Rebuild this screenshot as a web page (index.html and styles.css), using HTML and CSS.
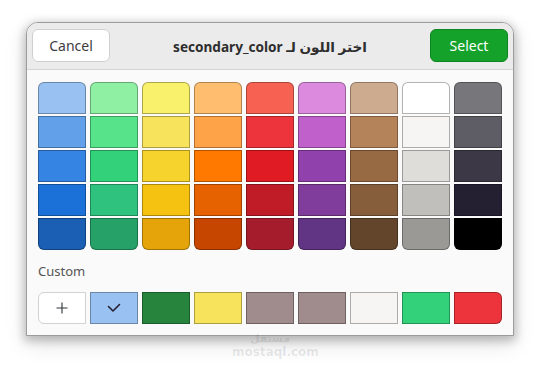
FILE: index.html
```
<!DOCTYPE html>
<html lang="ar">
<head>
<meta charset="utf-8">
<link rel="stylesheet" href="styles.css">
</head>
<body>
<div class="window">
  <div class="header">
    <button class="btn cancel">Cancel</button>
    <div class="title" dir="rtl">اختر اللون لـ secondary_color</div>
    <button class="btn select">Select</button>
  </div>
  <div class="content">
    <div class="palette">
      <div class="col">
        <div class="sw" style="background:#99c1f1"></div>
        <div class="sw" style="background:#62a0ea"></div>
        <div class="sw" style="background:#3584e4"></div>
        <div class="sw" style="background:#1c71d8"></div>
        <div class="sw" style="background:#1a5fb4"></div>
      </div>
      <div class="col">
        <div class="sw" style="background:#8ff0a4"></div>
        <div class="sw" style="background:#57e389"></div>
        <div class="sw" style="background:#33d17a"></div>
        <div class="sw" style="background:#2ec27e"></div>
        <div class="sw" style="background:#26a269"></div>
      </div>
      <div class="col">
        <div class="sw" style="background:#f9f06b"></div>
        <div class="sw" style="background:#f8e45c"></div>
        <div class="sw" style="background:#f6d32d"></div>
        <div class="sw" style="background:#f5c211"></div>
        <div class="sw" style="background:#e5a50a"></div>
      </div>
      <div class="col">
        <div class="sw" style="background:#ffbe6f"></div>
        <div class="sw" style="background:#ffa348"></div>
        <div class="sw" style="background:#ff7800"></div>
        <div class="sw" style="background:#e66100"></div>
        <div class="sw" style="background:#c64600"></div>
      </div>
      <div class="col">
        <div class="sw" style="background:#f66151"></div>
        <div class="sw" style="background:#ed333b"></div>
        <div class="sw" style="background:#e01b24"></div>
        <div class="sw" style="background:#c01c28"></div>
        <div class="sw" style="background:#a51d2d"></div>
      </div>
      <div class="col">
        <div class="sw" style="background:#dc8add"></div>
        <div class="sw" style="background:#c061cb"></div>
        <div class="sw" style="background:#9141ac"></div>
        <div class="sw" style="background:#813d9c"></div>
        <div class="sw" style="background:#613583"></div>
      </div>
      <div class="col">
        <div class="sw" style="background:#cdab8f"></div>
        <div class="sw" style="background:#b5835a"></div>
        <div class="sw" style="background:#986a44"></div>
        <div class="sw" style="background:#865e3c"></div>
        <div class="sw" style="background:#63452c"></div>
      </div>
      <div class="col">
        <div class="sw" style="background:#ffffff"></div>
        <div class="sw" style="background:#f6f5f4"></div>
        <div class="sw" style="background:#deddda"></div>
        <div class="sw" style="background:#c0bfbc"></div>
        <div class="sw" style="background:#9a9996"></div>
      </div>
      <div class="col">
        <div class="sw" style="background:#77767b"></div>
        <div class="sw" style="background:#5e5c64"></div>
        <div class="sw" style="background:#3d3846"></div>
        <div class="sw" style="background:#241f31"></div>
        <div class="sw" style="background:#000000"></div>
      </div>
    </div>
    <div class="label">Custom</div>
    <div class="custom">
      <div class="sw add">
        <svg width="12" height="12" viewBox="0 0 12 12"><path d="M6 0.5V11.5M0.5 6H11.5" stroke="#2e3436" stroke-width="1.1" fill="none"/></svg>
      </div>
      <div class="sw" style="background:#99c1f1">
        <svg width="14" height="10" viewBox="0 0 14 10"><path d="M1.5 3.5L6 8L12.5 1.5" stroke="#241f31" stroke-width="1.6" fill="none" stroke-linecap="round" stroke-linejoin="round"/></svg>
      </div>
      <div class="sw" style="background:#26843c"></div>
      <div class="sw" style="background:#f8e45c"></div>
      <div class="sw" style="background:#a08c8c"></div>
      <div class="sw" style="background:#a08c8c"></div>
      <div class="sw" style="background:#f6f5f4"></div>
      <div class="sw" style="background:#33d17a"></div>
      <div class="sw last" style="background:#ed333b"></div>
    </div>
  </div>
</div>
<div class="watermark">
  <div class="wm-ar">مستقل</div>
  <div class="wm-en">mostaql.com</div>
</div>
</body>
</html>
```
FILE: styles.css
```
html, body {
  margin: 0;
  padding: 0;
  background: #ffffff;
}
body {
  width: 540px;
  height: 365px;
  overflow: hidden;
  position: relative;
  font-family: "Noto Sans", "DejaVu Sans", sans-serif;
}
.window {
  box-sizing: border-box;
  margin: 22px 0 0 26px;
  width: 488px;
  height: 314px;
  background: #fafafa;
  border: 1px solid #9c9c9c;
  border-radius: 12px 12px 0 0;
  box-shadow: 0 3px 10px 2px rgba(0, 0, 0, 0.22), 0 8px 22px rgba(0, 0, 0, 0.12);
  overflow: hidden;
}
.header {
  height: 47px;
  box-sizing: border-box;
  background: #ebebeb;
  border-bottom: 1px solid #d5d5d5;
  display: flex;
  align-items: flex-start;
  justify-content: space-between;
  padding: 6px 5px 0 5px;
}
.btn {
  box-sizing: border-box;
  width: 78px;
  height: 33px;
  border-radius: 6px;
  font-family: "Noto Sans", "DejaVu Sans", sans-serif;
  font-size: 14px;
  padding: 0;
  display: flex;
  align-items: center;
  justify-content: center;
}
.cancel {
  background: #ffffff;
  border: 1px solid #cfcfcf;
  color: #3d3d3d;
}
.select {
  background: #14a22b;
  border: 1px solid #0f8422;
  color: #ffffff;
}
.title {
  align-self: center;
  margin-top: -6px;
  font-weight: bold;
  font-size: 13.6px;
  color: #2e2e2e;
}
.content {
  padding: 12px 11px 0 11px;
}
.palette {
  display: flex;
  gap: 4px;
}
.col {
  display: flex;
  flex-direction: column;
  gap: 2px;
}
.sw {
  box-sizing: border-box;
  width: 48px;
  height: 32px;
  border: 1px solid rgba(0, 0, 0, 0.3);
  display: flex;
  align-items: center;
  justify-content: center;
}
.col .sw:first-child {
  border-radius: 6px 6px 0 0;
}
.col .sw:last-child {
  border-radius: 0 0 6px 6px;
}
.label {
  margin-top: 12px;
  height: 18px;
  line-height: 18px;
  font-size: 13px;
  color: #555555;
}
.custom {
  margin-top: 12px;
  display: flex;
  gap: 4px;
}
.custom .sw {
  height: 32px;
}
.add {
  background: #ffffff;
  border-color: #d2d2d2;
  border-radius: 6px 0 0 6px;
}
.last {
  border-radius: 0 6px 6px 0;
}
.watermark {
  position: absolute;
  left: 232px;
  top: 332px;
  width: 76px;
  text-align: center;
  color: rgba(0, 0, 0, 0.09);
  font-family: "DejaVu Sans", sans-serif;
}
.wm-ar {
  font-size: 11px;
  line-height: 13px;
  font-weight: bold;
}
.wm-en {
  font-size: 12px;
  line-height: 15px;
  font-weight: bold;
}
```
